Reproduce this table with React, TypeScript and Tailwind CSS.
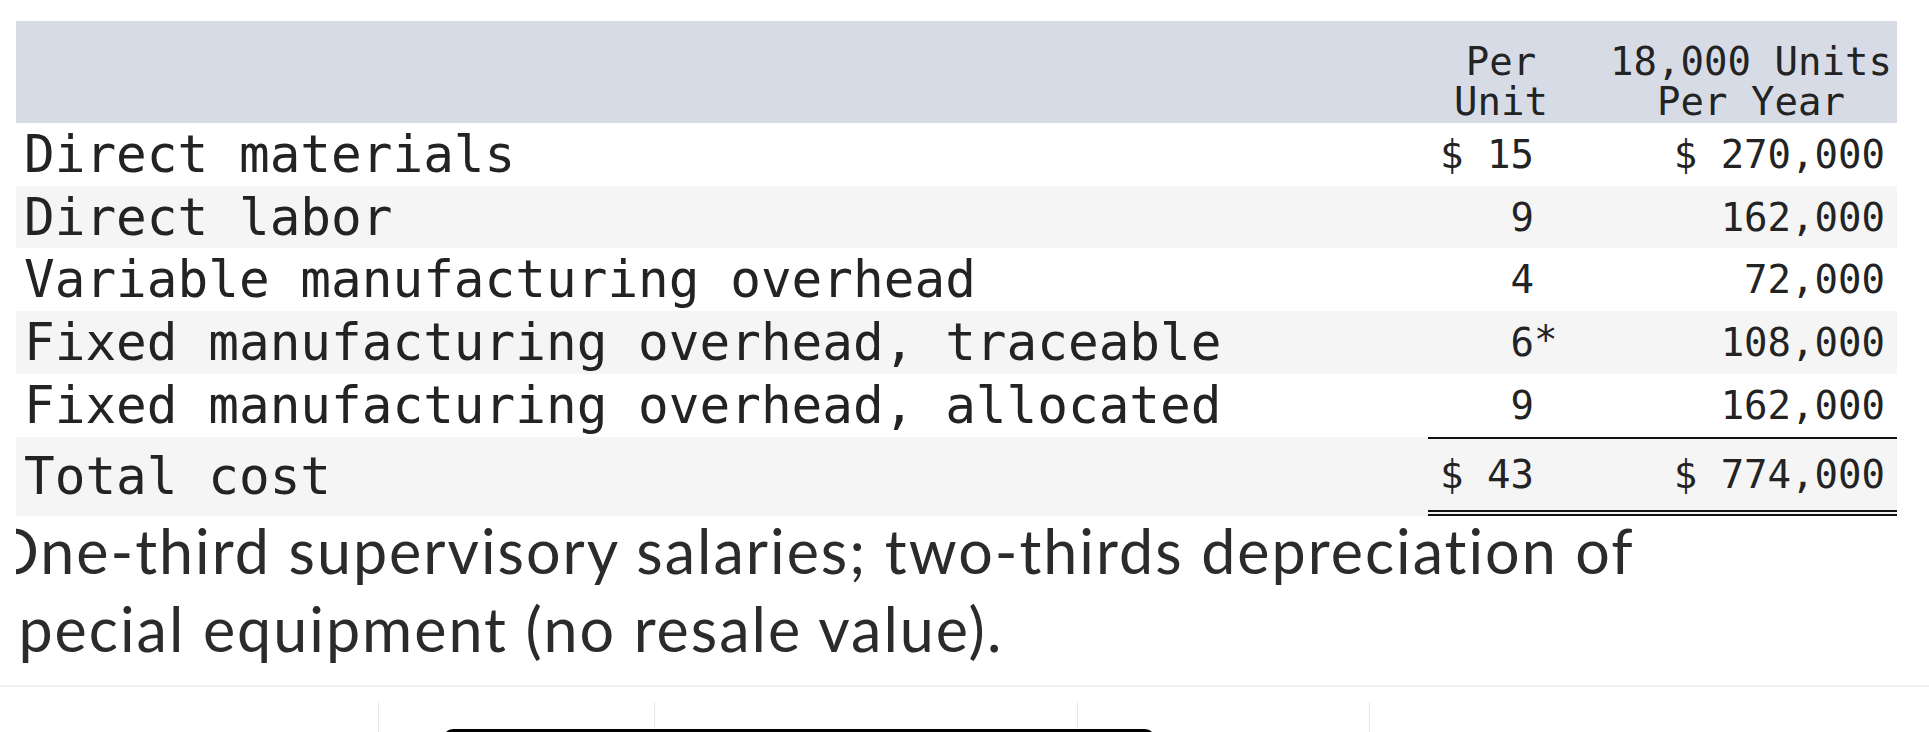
import React from "react";

type Row = { label: string; unit: string; year: string; star?: boolean; gray: boolean; h: string };

const rows: Row[] = [
  { label: "Direct materials", unit: "$ 15", year: "$ 270,000", gray: false, h: "h-[63px]" },
  { label: "Direct labor", unit: "9", year: "162,000", gray: true, h: "h-[62px]" },
  { label: "Variable manufacturing overhead", unit: "4", year: "72,000", gray: false, h: "h-[63px]" },
  { label: "Fixed manufacturing overhead, traceable", unit: "6", star: true, year: "108,000", gray: true, h: "h-[63px]" },
  { label: "Fixed manufacturing overhead, allocated", unit: "9", year: "162,000", gray: false, h: "h-[63px]" },
];

export default function App() {
  return (
    <div className="relative w-[1929px] h-[732px] overflow-hidden bg-white text-[#232323]">
      <div className="pt-[21px] pl-[16px]">
        <div className="w-[1881px] font-['DejaVu_Sans_Mono',monospace]">
          {/* header */}
          <div className="flex h-[102px] bg-[#d6dbe5] pt-[21px] text-[39px] leading-[40px]">
            <div className="flex-1" />
            <div className="w-[177px] pr-[31px] text-center">
              <div>Per</div>
              <div>Unit</div>
            </div>
            <div className="w-[292px] text-center">
              <div>18,000 Units</div>
              <div>Per Year</div>
            </div>
          </div>
          {rows.map((r) => (
            <div
              key={r.label}
              className={`flex items-center ${r.h} ${r.gray ? "bg-[#f5f5f5]" : "bg-white"}`}
            >
              <div className="flex-1 pl-[8px] text-[51px] leading-none whitespace-nowrap">{r.label}</div>
              <div className="w-[177px] pr-[71px] text-right text-[39px] leading-none">
                <span className="relative">
                  {r.unit}
                  {r.star && <span className="absolute left-full top-0">*</span>}
                </span>
              </div>
              <div className="w-[292px] pr-[12px] text-right text-[39px] leading-none whitespace-nowrap">
                {r.year}
              </div>
            </div>
          ))}
          {/* total */}
          <div className="flex h-[79px] bg-[#f5f5f5]">
            <div className="flex-1 flex items-center pl-[8px] text-[51px] leading-none">Total cost</div>
            <div className="flex w-[469px] border-t-2 border-b-[6px] border-double border-t-solid border-[#111]">
              <div className="flex w-[177px] items-center justify-end pr-[71px] text-[39px] leading-none">$ 43</div>
              <div className="flex w-[292px] items-center justify-end pr-[12px] text-[39px] leading-none whitespace-nowrap">
                $ 774,000
              </div>
            </div>
          </div>
        </div>
        {/* footnote */}
        <div className="-mt-[4px] w-[1881px] overflow-hidden font-['Lato',sans-serif] text-[61px] leading-[78px] tracking-[2px] text-[#2b2b2b]">
          <div className="-ml-[26px] whitespace-nowrap">
            One-third supervisory salaries; two-thirds depreciation of
            <br />
            special equipment (no resale value).
          </div>
        </div>
      </div>
      {/* bottom separator and bar */}
      <div className="mt-[17px] h-[2px] w-full bg-[#f0f0f0]" />
      <div className="mt-[15px] flex h-[30px]">
        <div className="w-[378px]" />
        <div className="w-[276px] border-l border-[#e9e9e9]" />
        <div className="w-[423px] border-l border-[#e9e9e9]" />
        <div className="w-[292px] border-l border-[#e9e9e9]" />
        <div className="flex-1 border-l border-[#e9e9e9]" />
      </div>
      <div className="absolute left-[443px] top-[729px] h-[10px] w-[712px] rounded-t-[12px] bg-black" />
    </div>
  );
}
